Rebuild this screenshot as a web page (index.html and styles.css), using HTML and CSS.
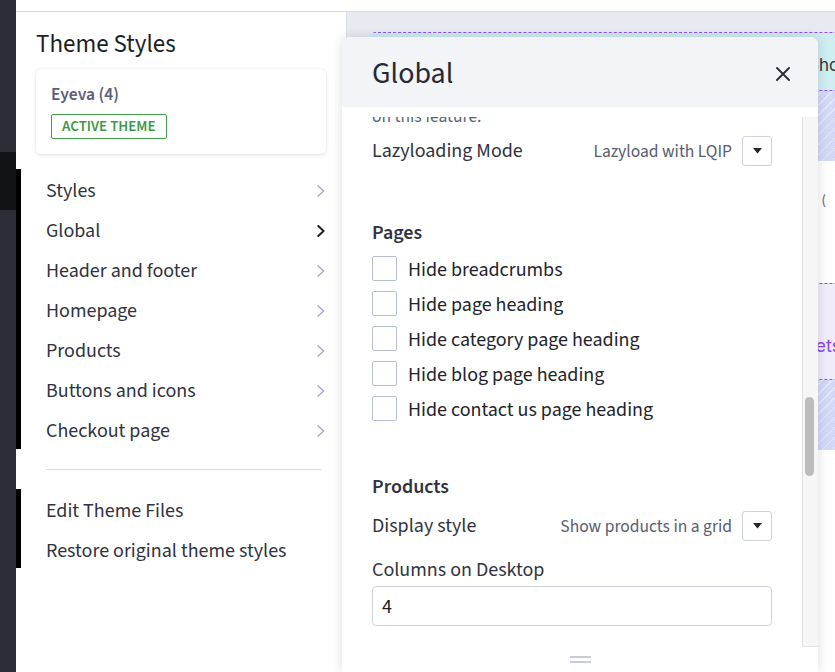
FILE: index.html
```html
<!DOCTYPE html>
<html lang="en">
<head>
<meta charset="utf-8">
<title>Theme Styles</title>
<link rel="stylesheet" href="styles.css">
</head>
<body>
<div class="app">
  <div class="rail">
    <div class="rail-top"></div>
    <div class="rail-dark"></div>
  </div>
  <div class="main">
    <div class="topbar"></div>
    <div class="workspace">
      <aside class="sidebar">
        <span class="edge-mark edge-mark-a"></span>
        <span class="edge-mark edge-mark-b"></span>
        <h1 class="sidebar-title">Theme Styles</h1>
        <div class="theme-card">
          <div class="theme-name">Eyeva (4)</div>
          <div class="badge">ACTIVE THEME</div>
        </div>
        <ul class="nav">
          <li class="nav-item"><span>Styles</span><svg class="chev" width="8" height="12" viewBox="0 0 8 12"><path d="M1.3 1 L6.6 6 L1.3 11" /></svg></li>
          <li class="nav-item nav-item-active"><span>Global</span><svg class="chev" width="8" height="12" viewBox="0 0 8 12"><path d="M1.3 1 L6.6 6 L1.3 11" /></svg></li>
          <li class="nav-item"><span>Header and footer</span><svg class="chev" width="8" height="12" viewBox="0 0 8 12"><path d="M1.3 1 L6.6 6 L1.3 11" /></svg></li>
          <li class="nav-item"><span>Homepage</span><svg class="chev" width="8" height="12" viewBox="0 0 8 12"><path d="M1.3 1 L6.6 6 L1.3 11" /></svg></li>
          <li class="nav-item"><span>Products</span><svg class="chev" width="8" height="12" viewBox="0 0 8 12"><path d="M1.3 1 L6.6 6 L1.3 11" /></svg></li>
          <li class="nav-item"><span>Buttons and icons</span><svg class="chev" width="8" height="12" viewBox="0 0 8 12"><path d="M1.3 1 L6.6 6 L1.3 11" /></svg></li>
          <li class="nav-item"><span>Checkout page</span><svg class="chev" width="8" height="12" viewBox="0 0 8 12"><path d="M1.3 1 L6.6 6 L1.3 11" /></svg></li>
        </ul>
        <div class="divider"></div>
        <ul class="links">
          <li>Edit Theme Files</li>
          <li>Restore original theme styles</li>
        </ul>
      </aside>

      <section class="preview">
        <div class="frame">
          <div class="pv-head"><span class="pv-head-text">Shop</span></div>
          <div class="pv-hatch"></div>
          <div class="pv-white"><span class="pv-glyph">(</span></div>
          <div class="pv-promo"><span class="pv-promo-text">Sets</span></div>
          <div class="pv-hatch"></div>
        </div>
      </section>

      <div class="modal">
        <div class="modal-header">
          <h2 class="modal-title">Global</h2>
          <svg class="close" width="14" height="14" viewBox="0 0 14 14"><path d="M1 1 L13 13 M13 1 L1 13" /></svg>
        </div>
        <div class="modal-body">
          <div class="modal-scroll">
            <p class="desc">on this feature.</p>
            <div class="select-row">
              <span class="field-label">Lazyloading Mode</span>
              <div class="select">
                <span class="select-value">Lazyload with LQIP</span>
                <span class="select-btn"><svg width="9" height="6" viewBox="0 0 9 6"><path d="M0 0 H9 L4.5 5.5 Z" /></svg></span>
              </div>
            </div>

            <h3 class="group-title group-pages">Pages</h3>
            <ul class="checks">
              <li class="check"><span class="box"></span><span class="check-label">Hide breadcrumbs</span></li>
              <li class="check"><span class="box"></span><span class="check-label">Hide page heading</span></li>
              <li class="check"><span class="box"></span><span class="check-label">Hide category page heading</span></li>
              <li class="check"><span class="box"></span><span class="check-label">Hide blog page heading</span></li>
              <li class="check"><span class="box"></span><span class="check-label">Hide contact us page heading</span></li>
            </ul>

            <h3 class="group-title group-products">Products</h3>
            <div class="select-row select-row-tight">
              <span class="field-label">Display style</span>
              <div class="select">
                <span class="select-value">Show products in a grid</span>
                <span class="select-btn"><svg width="9" height="6" viewBox="0 0 9 6"><path d="M0 0 H9 L4.5 5.5 Z" /></svg></span>
              </div>
            </div>
            <div class="field-label stacked">Columns on Desktop</div>
            <div class="text-input">4</div>
            <div class="field-label stacked next">Columns on Tablet</div>
          </div>
          <div class="scrolltrack"><div class="thumb"></div></div>
        </div>
        <div class="modal-footer"><span class="handle"></span></div>
      </div>
    </div>
  </div>
</div>
</body>
</html>
```
FILE: styles.css
```css
* { box-sizing: border-box; margin: 0; padding: 0; }
html, body { width: 835px; height: 672px; overflow: hidden; }
body {
  font-family: "Source Sans 3", "Source Sans Pro", "Noto Sans", sans-serif;
  color: #30333f;
  background: #fff;
}
ul { list-style: none; }

.app { display: flex; height: 672px; }

/* dark rail */
.rail { width: 16px; flex-shrink: 0; display: flex; flex-direction: column; background: #2b2e37; }
.rail-top { height: 152px; }
.rail-dark { height: 58px; background: #121316; }

.main { flex: 1; display: flex; flex-direction: column; min-width: 0; }
.topbar { height: 12px; background: #fff; border-bottom: 1px solid #dcdde7; }
.workspace { flex: 1; display: flex; position: relative; min-height: 0; }

/* sidebar */
.sidebar {
  width: 331px; flex-shrink: 0;
  border-right: 1px solid #dcdde7;
  padding: 17px 20px 0 20px;
  position: relative;
  background: #fff;
}
.edge-mark { position: absolute; left: 0; width: 5px; background: #000; }
.edge-mark-a { top: 157px; height: 280px; }
.edge-mark-b { top: 477px; height: 79px; }

.sidebar-title { font-size: 25px; line-height: 31px; font-weight: 400; color: #1e1f26; }

.theme-card {
  margin-top: 9px;
  padding: 14px 15px 15px;
  border-radius: 5px;
  box-shadow: 0 1px 4px rgba(30, 35, 60, 0.13), 0 0 1px rgba(30, 35, 60, 0.12);
  display: flex; flex-direction: column; align-items: flex-start;
}
.theme-name { font-size: 17.5px; line-height: 23px; font-weight: 600; color: #5b6077; }
.badge {
  margin-top: 8px;
  border: 1px solid #3f9f4b;
  border-radius: 2px;
  padding: 0 10px;
  font-size: 15px; line-height: 23px; font-weight: 600;
  color: #3a9b46;
}

.nav { margin-top: 17px; padding: 0 1px 0 10px; }
.nav-item {
  height: 40px;
  display: flex; align-items: center; justify-content: space-between;
  font-size: 20px; color: #30333f;
}
.chev path { fill: none; stroke: #a9b0c6; stroke-width: 1.7; stroke-linecap: round; stroke-linejoin: round; }
.nav-item-active .chev path { stroke: #1f2129; stroke-width: 2; }

.divider { margin: 18px 5px 0 10px; height: 1px; background: #d9dbe5; }
.links { margin-top: 21px; padding-left: 10px; }
.links li { font-size: 20px; line-height: 40px; color: #30333f; }

/* storefront preview */
.preview { flex: 1; background: #e8eaf1; padding: 20px 0 0 21px; overflow: hidden; min-width: 0; }
.frame { width: 620px; height: 100%; background: #fff; border-radius: 8px 0 0 0; overflow: hidden; }
.pv-head {
  height: 59px; background: #cfeef1;
  border-top: 1px dashed #9a4cf2; border-bottom: 1px dashed #9a4cf2;
  display: flex; align-items: center;
  padding: 6px 0 0 440px;
}
.pv-head-text { font-family: "Inter", sans-serif; font-size: 17px; color: #333; }
.pv-hatch {
  height: 70px;
  background: repeating-linear-gradient(135deg, #d3d8f6 0 6px, #e6e9fb 6px 7px);
}
.pv-white { height: 122px; padding: 28px 0 0 453px; }
.pv-glyph { font-family: "Inter", sans-serif; font-size: 14px; color: #7a7a7a; }
.pv-promo {
  height: 97px; background: #f1ecfb;
  border-top: 1px dashed #9a4cf2; border-bottom: 1px dashed #9a4cf2;
  padding: 50px 0 0 436px;
}
.pv-promo-text { font-family: "Inter", sans-serif; font-size: 18px; line-height: 24px; color: #8d45f2; }

/* modal */
.modal {
  position: absolute; left: 326px; top: 25px; bottom: 0; width: 476px;
  background: #fff;
  border-radius: 8px 8px 0 0;
  box-shadow: 0 0 12px rgba(25, 30, 60, 0.16);
  display: flex; flex-direction: column;
  overflow: hidden;
}
.modal-header {
  height: 70px; flex-shrink: 0;
  background: #f3f4f8;
  display: flex; align-items: center; justify-content: space-between;
  padding: 4px 28px 0 30px;
}
.modal-title { font-size: 30px; line-height: 36px; font-weight: 400; color: #272932; }
.close path { stroke: #2b2d36; stroke-width: 1.9; stroke-linecap: round; fill: none; }

.modal-body { flex: 1; display: flex; min-height: 0; padding-top: 10px; }
.modal-scroll { flex: 1; padding: 0 30px; min-width: 0; overflow: hidden; }
.scrolltrack {
  width: 16px; flex-shrink: 0;
  background: #f6f6f7;
  border-left: 1px solid #e3e3e6;
  border-bottom: 1px solid #e3e3e6;
  padding: 280px 0 0 2px;
}
.thumb { width: 9px; height: 79px; border-radius: 5px; background: #bcbcbc; }

.desc { margin-top: -12.5px; font-size: 17.5px; line-height: 24px; color: #5e6376; }

.select-row { margin-top: 7.5px; height: 30px; display: flex; align-items: center; justify-content: space-between; }
.select-row-tight { margin-top: 11px; }
.field-label { font-size: 20px; line-height: 26px; color: #30333f; }
.select { display: flex; align-items: center; gap: 10px; }
.select-value { font-size: 17.5px; color: #585d71; }
.select-btn {
  width: 30px; height: 30px;
  border: 1px solid #cdd1e2; border-radius: 3px;
  display: flex; align-items: center; justify-content: center;
}
.select-btn path { fill: #23252d; }

.group-title { font-size: 20px; line-height: 26px; font-weight: 600; color: #30333f; }
.group-pages { margin-top: 54px; }
.group-products { margin-top: 52px; }

.checks { margin-top: 10px; display: flex; flex-direction: column; gap: 9px; }
.check { display: flex; align-items: flex-start; gap: 11px; }
.box { width: 25px; height: 25px; flex-shrink: 0; border: 1px solid #b8bdd8; border-radius: 2px; background: #fff; }
.check-label { font-size: 20px; line-height: 24px; padding-top: 2px; color: #22242c; }

.stacked { margin-top: 16px; }
.text-input {
  margin-top: 3px;
  height: 40px;
  border: 1px solid #cdd1e2; border-radius: 4px;
  padding: 3px 9px 0;
  font-size: 20px; line-height: 35px; color: #1f2128;
}
.next { margin-top: 16px; }

.modal-footer { height: 25px; flex-shrink: 0; background: #fff; display: flex; justify-content: center; padding-top: 9px; }
.handle { width: 21px; height: 7px; border-top: 2px solid #c9cbd6; border-bottom: 2px solid #c9cbd6; }
```
